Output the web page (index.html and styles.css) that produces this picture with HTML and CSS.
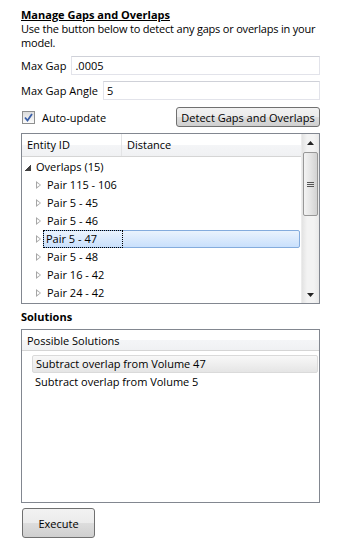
FILE: index.html
```html
<!DOCTYPE html>
<html lang="en">

<head>
    <meta charset="UTF-8">
    <meta name="viewport" content="width=device-width, initial-scale=1.0">
    <title>Manage Gaps and Overlaps</title>
    <link rel="stylesheet" href="styles.css">
</head>

<body>
    <div class="panel">
        <h1 class="title">Manage Gaps and Overlaps</h1>
        <p class="desc">Use the button below to detect any gaps or overlaps in your model.</p>

        <div class="field">
            <label for="maxGap">Max Gap</label>
            <input type="text" id="maxGap" value=".0005">
        </div>

        <div class="field">
            <label for="maxAngle">Max Gap Angle</label>
            <input type="text" id="maxAngle" value="5">
        </div>

        <div class="actions">
            <label class="check">
                <span class="box">
                    <svg width="9" height="9" viewBox="0 0 9 9">
                        <path d="M1 4.5 L3.5 7.5 L8 1" fill="none" stroke="#3a5fa8" stroke-width="1.8" />
                    </svg>
                </span>
                Auto-update
            </label>
            <button class="btn detect">Detect Gaps and Overlaps</button>
        </div>

        <div class="tree">
            <div class="tree-main">
                <div class="list-head">
                    <div class="col col-id">Entity ID</div>
                    <div class="col">Distance</div>
                </div>
                <div class="tree-body">
                    <div class="node root"><span class="arrow open"></span>Overlaps (15)</div>
                    <div class="node child"><span class="arrow"></span><span class="label">Pair 115 - 106</span></div>
                    <div class="node child"><span class="arrow"></span><span class="label">Pair 5 - 45</span></div>
                    <div class="node child"><span class="arrow"></span><span class="label">Pair 5 - 46</span></div>
                    <div class="node child selected"><span class="arrow"></span><span class="label"><span class="focus">Pair 5 - 47</span></span></div>
                    <div class="node child"><span class="arrow"></span><span class="label">Pair 5 - 48</span></div>
                    <div class="node child"><span class="arrow"></span><span class="label">Pair 16 - 42</span></div>
                    <div class="node child"><span class="arrow"></span><span class="label">Pair 24 - 42</span></div>
                </div>
            </div>
            <div class="scrollbar">
                <div class="sb-arrow">
                    <svg width="7" height="4" viewBox="0 0 7 4"><path d="M0 4 L3.5 0 L7 4 Z" fill="#222" /></svg>
                </div>
                <div class="sb-track">
                    <div class="thumb">
                        <span></span><span></span><span></span>
                    </div>
                </div>
                <div class="sb-arrow">
                    <svg width="7" height="4" viewBox="0 0 7 4"><path d="M0 0 L3.5 4 L7 0 Z" fill="#222" /></svg>
                </div>
            </div>
        </div>

        <h2 class="section">Solutions</h2>
        <div class="solutions">
            <div class="list-head small">
                <div class="col">Possible Solutions</div>
            </div>
            <div class="sol-body">
                <div class="sol selected">Subtract overlap from Volume 47</div>
                <div class="sol">Subtract overlap from Volume 5</div>
            </div>
        </div>

        <button class="btn execute">Execute</button>
    </div>
</body>

</html>
```

FILE: styles.css
```css
body {
    margin: 0;
    padding: 0;
    background-color: #ffffff;
    font-family: "Open Sans", "Liberation Sans", sans-serif;
    font-size: 11px;
    color: #000000;
}

.panel {
    width: 299px;
    padding: 8px 24px 0 21px;
}

.title {
    font-size: 11px;
    font-weight: bold;
    text-decoration: underline;
    margin: 0;
    line-height: 14px;
}

.desc {
    margin: 0;
    line-height: 14px;
    letter-spacing: -0.2px;
}

.field {
    display: flex;
    align-items: center;
    margin-top: 6px;
    height: 19px;
}

.field label {
    margin-right: 5px;
    white-space: nowrap;
}

.field input {
    flex: 1;
    height: 19px;
    box-sizing: border-box;
    border: 1px solid #e2e3ea;
    border-top-color: #cfd1d8;
    padding: 0 3px;
    font-family: inherit;
    font-size: 11px;
    color: #000;
    outline: none;
}

.field + .field {
    margin-top: 6px;
}

.actions {
    display: flex;
    align-items: center;
    justify-content: space-between;
    margin-top: 7px;
    height: 20px;
}

.check {
    display: flex;
    align-items: center;
    gap: 7px;
    margin-left: 1px;
}

.box {
    width: 11px;
    height: 11px;
    border: 1px solid #8e8f8f;
    background: linear-gradient(#dcdcdc, #fbfbfb);
    display: flex;
    align-items: center;
    justify-content: center;
}

.btn {
    font-family: inherit;
    font-size: 11px;
    color: #000;
    border: 1px solid #707070;
    border-radius: 3px;
    background: linear-gradient(#f2f2f2 0%, #ebebeb 50%, #dddddd 51%, #cfcfcf 100%);
    cursor: pointer;
    padding: 0;
}

.detect {
    width: 144px;
    height: 20px;
}

.tree {
    display: flex;
    margin-top: 6px;
    height: 171px;
    border: 1px solid #828790;
    box-sizing: border-box;
}

.tree-main {
    flex: 1;
    overflow: hidden;
}

.list-head {
    display: flex;
    height: 23px;
    background: linear-gradient(#ffffff 0%, #ffffff 50%, #f4f5f7 51%, #f0f1f3 100%);
    border-bottom: 1px solid #d5d5d5;
    box-sizing: border-box;
}

.list-head.small {
    height: 21px;
}

.col {
    padding-left: 5px;
    line-height: 22px;
}

.col-id {
    width: 94px;
    border-right: 1px solid #e3e4e6;
}

.tree-body {
    padding-top: 1px;
}

.node {
    display: flex;
    align-items: center;
    height: 18px;
    line-height: 18px;
}

.root {
    padding-left: 3px;
}

.child {
    padding-left: 14px;
}

.arrow {
    flex: none;
    width: 0;
    height: 0;
    border-top: 4px solid transparent;
    border-bottom: 4px solid transparent;
    border-left: 5px solid #a6a6a6;
    margin-right: 5px;
    position: relative;
}

.arrow::after {
    content: "";
    position: absolute;
    left: -4px;
    top: -2px;
    border-top: 2px solid transparent;
    border-bottom: 2px solid transparent;
    border-left: 3px solid #ffffff;
}

.arrow.open {
    border: none;
    width: 6px;
    height: 6px;
    margin-right: 5px;
    margin-top: 2px;
    background: linear-gradient(to bottom right, transparent 50%, #404040 50%);
}

.arrow.open::after {
    display: none;
}

.label {
    padding: 0 2px 0 1px;
}

.selected .arrow {
    margin-right: 2px;
}

.selected .label {
    flex: 1;
    height: 18px;
    margin-right: 1px;
    padding: 0;
    box-sizing: border-box;
    border: 1px solid #84acdd;
    border-radius: 2px;
    background: linear-gradient(#eaf3fd, #c9e0fc);
    display: flex;
}

.focus {
    width: 78px;
    height: 16px;
    line-height: 16px;
    padding-left: 2px;
    box-sizing: border-box;
    outline: 1px dotted #000;
    outline-offset: 0;
}

.scrollbar {
    width: 17px;
    display: flex;
    flex-direction: column;
    background: linear-gradient(to right, #e3e3e3, #f3f3f3 30%, #f3f3f3 70%, #e8e8e8);
    border-left: 1px solid #ececec;
}

.sb-arrow {
    height: 17px;
    display: flex;
    align-items: center;
    justify-content: center;
}

.sb-track {
    flex: 1;
}

.thumb {
    margin: 1px 1px 0 1px;
    height: 64px;
    box-sizing: border-box;
    border: 1px solid #979797;
    border-radius: 2px;
    background: linear-gradient(to right, #f3f3f3, #e4e4e4 50%, #d2d2d2);
    display: flex;
    flex-direction: column;
    align-items: center;
    justify-content: center;
    gap: 1px;
}

.thumb span {
    width: 7px;
    height: 1px;
    background-color: #555;
}

.section {
    font-size: 11px;
    font-weight: bold;
    margin: 6px 0 0 0;
    line-height: 14px;
}

.solutions {
    margin-top: 5px;
    height: 174px;
    border: 1px solid #828790;
    box-sizing: border-box;
}

.sol-body {
    padding: 4px 1px 0 10px;
}

.sol {
    height: 18px;
    line-height: 18px;
    padding-left: 3px;
    box-sizing: border-box;
}

.sol.selected {
    border: 1px solid #dadada;
    border-radius: 2px;
    background: linear-gradient(#f8f8f8, #e5e5e5);
    line-height: 16px;
}

.execute {
    margin-top: 5px;
    margin-left: 1px;
    width: 73px;
    height: 30px;
}
```
